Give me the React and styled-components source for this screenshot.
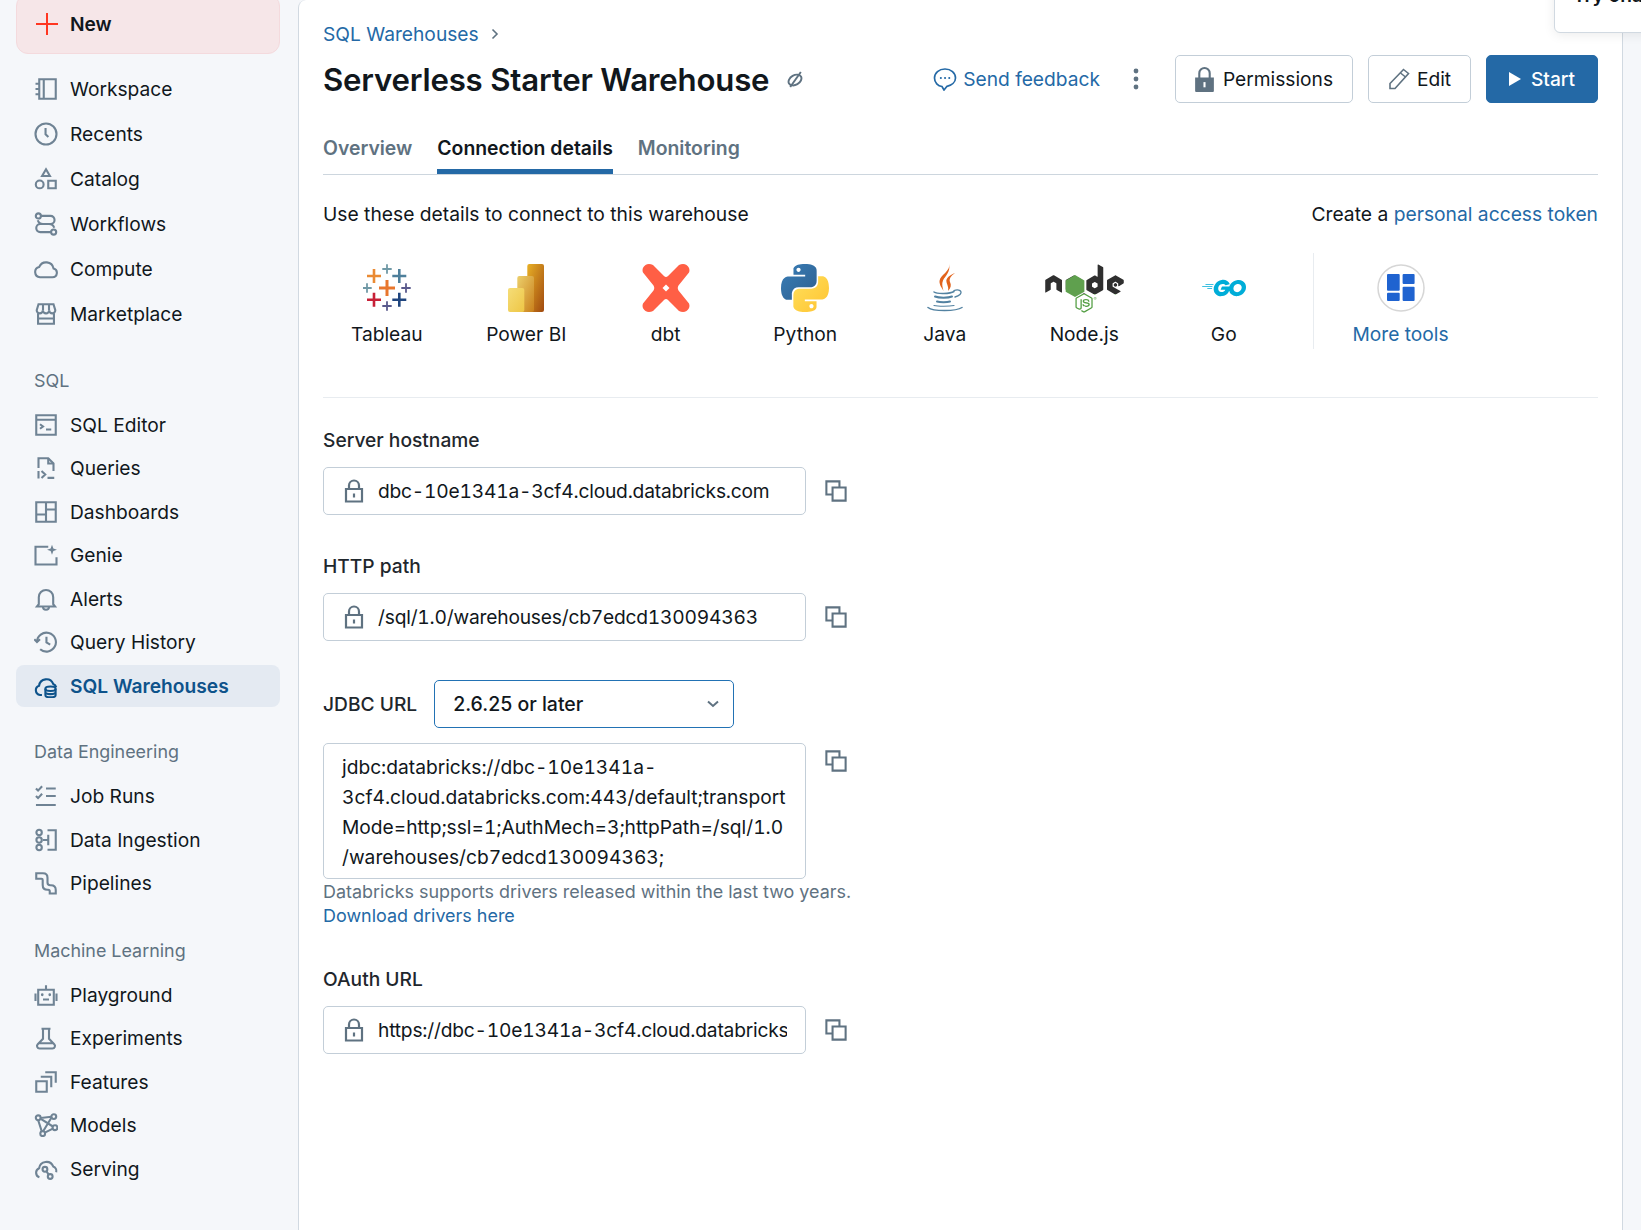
import React from 'react';
import styled, { createGlobalStyle } from 'styled-components';
import { SiGo } from 'react-icons/si';
import { FaNode } from 'react-icons/fa';

const GlobalStyle = createGlobalStyle`
  html, body {
    margin: 0;
    padding: 0;
    background: #f5f7fa;
    font-family: Inter, "Noto Sans", sans-serif;
    color: #11171c;
    -webkit-font-smoothing: antialiased;
  }
`;

const Page = styled.div`
  position: relative;
  display: flex;
  width: 1641px;
  height: 1230px;
  overflow: hidden;
  background: #f5f7fa;
`;

/* sidebar */
const Sidebar = styled.nav`
  flex: 0 0 298px;
  box-sizing: border-box;
  padding: 0 18px 0 16px;
`;

const NewButton = styled.button`
  display: flex;
  align-items: center;
  gap: 11px;
  box-sizing: border-box;
  width: 264px;
  height: 60px;
  margin: -6px 0 12.5px;
  padding: 0 0 0 18px;
  background: #f6e6e8;
  border: 1px solid #f4dadd;
  border-radius: 12px;
  font: 600 19.2px/24px Inter, sans-serif;
  color: #11171c;
`;

const NavRow = styled.a`
  display: flex;
  align-items: center;
  gap: 12px;
  box-sizing: border-box;
  height: ${(props) => (props.$active ? '41.5px' : props.$tall ? '45px' : '43.5px')};
  margin: ${(props) => (props.$active ? '1px 0' : '0')};
  padding-left: 18px;
  border-radius: 8px;
  background: ${(props) => (props.$active ? '#e4eaf2' : 'transparent')};
  color: ${(props) => (props.$active ? '#0e538b' : '#11171c')};
  font-size: 19.2px;
  line-height: 24px;
  font-weight: ${(props) => (props.$active ? 600 : 400)};
`;

const NavIcon = styled.svg`
  flex: 0 0 24px;
  width: 24px;
  height: 24px;
  fill: none;
  stroke: ${(props) => (props.$active ? '#0e538b' : '#6f8394')};
  stroke-width: 1.4;
`;

const SectionTitle = styled.div`
  margin: ${(props) => (props.$first ? '32px 0 10.5px' : '33.5px 0 10.5px')};
  padding-left: 18px;
  font-size: 17.9px;
  line-height: 24px;
  color: #5f7281;
`;

/* main panel */
const Main = styled.main`
  flex: 0 0 1325px;
  box-sizing: border-box;
  height: 1230px;
  padding: 22px 24px 0 24px;
  background: #fff;
  border-left: 1px solid #d1d9e1;
  border-right: 1px solid #d1d9e1;
  border-top-left-radius: 8px;
`;

const Breadcrumb = styled.div`
  display: flex;
  align-items: center;
  gap: 12px;
  height: 24px;
  font-size: 19.2px;
  color: #2469a6;
`;

const HeaderRow = styled.header`
  display: flex;
  align-items: center;
  justify-content: space-between;
  height: 48px;
  margin-top: 9px;
`;

const TitleGroup = styled.div`
  display: flex;
  align-items: center;
  gap: 18px;
  padding-top: 1px;
`;

const Title = styled.h1`
  margin: 0;
  font-size: 31.2px;
  line-height: 46px;
  font-weight: 600;
  letter-spacing: -0.2px;
  color: #11171c;
`;

const Actions = styled.div`
  display: flex;
  align-items: center;
`;

const FeedbackLink = styled.a`
  display: flex;
  align-items: center;
  gap: 6px;
  font-size: 19.2px;
  color: #2469a6;
`;

const ActionButton = styled.button`
  display: flex;
  align-items: center;
  justify-content: center;
  gap: ${(props) => props.$iconGap}px;
  box-sizing: border-box;
  width: ${(props) => props.$width}px;
  height: 48px;
  margin-left: ${(props) => props.$gap}px;
  padding: 0;
  background: ${(props) => (props.$primary ? '#2469a6' : '#fff')};
  border: 1px solid ${(props) => (props.$primary ? '#2469a6' : '#c3ced8')};
  border-radius: 5px;
  font: ${(props) => (props.$primary ? 500 : 400)} 19.2px/24px Inter, sans-serif;
  color: ${(props) => (props.$primary ? '#fff' : '#11171c')};
`;

const Tabs = styled.div`
  display: flex;
  gap: 25px;
  margin-top: 33px;
  border-bottom: 1px solid #cdd6de;
`;

const Tab = styled.div`
  padding-bottom: 9px;
  border-bottom: 5px solid ${(props) => (props.$active ? '#2469a6' : 'transparent')};
  font-size: 19.4px;
  line-height: 24px;
  font-weight: 600;
  color: ${(props) => (props.$active ? '#11171c' : '#5f7281')};
`;

const IntroRow = styled.div`
  display: flex;
  justify-content: space-between;
  margin-top: 27px;
  font-size: 19.25px;
  line-height: 24px;
`;

const Link = styled.a`
  color: #2469a6;
`;

const ToolsRow = styled.div`
  display: flex;
  height: 96px;
  margin: 27px 0 0 -6px;
`;

const Tool = styled.div`
  flex: 0 0 ${(props) => props.$width || 139.5}px;
  display: flex;
  flex-direction: column;
  align-items: center;
  padding-top: 11px;
  font-size: 19.2px;
  line-height: 24px;
  color: ${(props) => (props.$link ? '#2469a6' : '#11171c')};
`;

const ToolIcon = styled.div`
  display: flex;
  align-items: center;
  justify-content: center;
  height: 48px;
  margin-bottom: 10px;
`;

const ToolDivider = styled.div`
  width: 1px;
  margin-left: 19px;
  background: #e8ecf0;
`;

const Rule = styled.hr`
  height: 1px;
  margin: 48px 0 30px;
  border: 0;
  background: #e8ecf0;
`;

const Fields = styled.div`
  display: flex;
  flex-direction: column;
  gap: 39px;
`;

const Label = styled.div`
  font-size: 19.2px;
  line-height: 24px;
  font-weight: 500;
  color: #1f272d;
`;

const FieldRow = styled.div`
  display: flex;
  align-items: ${(props) => (props.$top ? 'flex-start' : 'center')};
  gap: 19px;
  margin-top: 15px;
`;

const InputBox = styled.div`
  display: flex;
  align-items: center;
  gap: 14px;
  box-sizing: border-box;
  width: 483px;
  height: 48px;
  padding: 0 18px 0 20px;
  border: 1px solid #c3ced8;
  border-radius: 5px;
  font-size: 19.2px;
  line-height: 24px;
`;

const InputValue = styled.div`
  flex: 1;
  min-width: 0;
  overflow: hidden;
  white-space: nowrap;
  font-variant-numeric: tabular-nums;
  letter-spacing: -0.2px;
`;

const TextBox = styled.div`
  box-sizing: border-box;
  width: 483px;
  height: 136px;
  padding: 8px 0 0 18px;
  border: 1px solid #c3ced8;
  border-radius: 5px;
  font-size: 19.2px;
  font-variant-numeric: tabular-nums;
  line-height: 30px;
  white-space: pre;
`;

const CopyIcon = styled.svg`
  flex: 0 0 22px;
  width: 22px;
  height: 22px;
  fill: none;
  stroke: #5f7281;
  stroke-width: 1.5;
  margin-top: ${(props) => (props.$top ? '7px' : '0')};
`;

const JdbcRow = styled.div`
  display: flex;
  align-items: center;
  gap: 17px;
`;

const Select = styled.div`
  display: flex;
  align-items: center;
  justify-content: space-between;
  box-sizing: border-box;
  width: 300px;
  height: 48px;
  padding: 0 14px 0 18px;
  border: 1px solid #2272b4;
  border-radius: 5px;
  font-size: 19.5px;
  font-weight: 500;
  line-height: 24px;
`;

const Helper = styled.div`
  margin-top: 1px;
  font-size: 17.95px;
  line-height: 24px;
  color: #5f7281;
`;

/* clipped popover at the top right corner */
const Popover = styled.div`
  position: absolute;
  top: -20px;
  left: 1554px;
  width: 120px;
  height: 53px;
  box-sizing: border-box;
  padding: 2px 0 0 18px;
  background: #fff;
  border: 1px solid #d1d9e1;
  border-radius: 6px;
  box-shadow: 0 2px 12px rgba(0, 0, 0, 0.08);
  font-size: 19.2px;
  line-height: 24px;
  font-weight: 600;
  white-space: nowrap;
`;

const navIcons = {
  workspace: <><path d="M3.5 1.5h11v13h-11z" /><path d="M6.5 1.5v13" /><path d="M1 4.5h2.5M1 8h2.5M1 11.5h2.5" /></>,
  recents: <><circle cx="8" cy="8" r="7" /><path d="M7.7 4v4.2L9.6 10" /></>,
  catalog: <><path d="M8 1.5 10.6 6H5.4z" /><circle cx="3.8" cy="11.6" r="2.6" /><path d="M9.5 9.2h5v5h-5z" /></>,
  workflows: <><circle cx="2.9" cy="2.6" r="1.7" /><circle cx="13.1" cy="13.4" r="1.7" /><path d="M4.6 2.6H11a2.7 2.7 0 0 1 0 5.4H4.2a2.7 2.7 0 0 0 0 5.4h7.2" /><path d="M2.5 5.5c.5 1.5 2 2.5 3.5 2.5M13.5 10.5C13 9 11.500 8 10 8" /></>,
  compute: <path d="M4 13.5h8.300a3 3 0 0 0 .7-5.900A5 5 0 0 0 3.500 6.600 3.500 3.500 0 0 0 4 13.500z" />,
  marketplace: <><path d="M1.800 5.500 3 1.500h10l1.200 4a2 2 0 0 1-4.100 0 2.100 2.100 0 0 1-4.200 0 2 2 0 0 1-4.100 0z" /><path d="M2.700 7.500v7h10.600v-7M2.700 11h10.600M6 1.500v4M10 1.500v4" /></>,
  editor: <><path d="M1.500 1.500h13v13h-13zM1.500 4.500h13" /><path d="M4 7.500 6 9l-2 1.500M8 11h3.500" /></>,
  queries: <><path d="M3 8V1.500h6.500L13 5v5" /><path d="M9.500 1.500V5H13" /><path d="M3 10v5M5 10l2.500 2.300L5 14.600M9 14.600h4.500" /></>,
  dashboards: <><path d="M1.500 1.500h13v13h-13z" /><path d="M8 1.500v13M1.500 9.700H8M8 6.300h6.500" /></>,
  genie: <><path d="M15 9.500v4.800H1V2.500h8.500" /><path d="M12 1.200l.9 2.400 2.400.9-2.400.9-.9 2.400-.9-2.400-2.400-.9 2.400-.9z" fill="#6f8394" stroke="none" /></>,
  alerts: <><path d="M3.200 11.500V6.800a4.800 4.800 0 0 1 9.600 0v4.700l1.200 1.500H2z" /><path d="M6 13.200a2 2 0 0 0 4 0" /></>,
  history: <><path d="M2 8a6.300 6.300 0 1 1 2.100 4.800" /><path d="M.2 6.200 2 8l2-1.800" /><path d="M8.300 4.500v3.800l2.500 1.400" /></>,
  warehouses: <><path d="M5.300 14H4a3.200 3.200 0 0 1-.6-6.200 4.900 4.900 0 0 1 9.400-1.200 3.200 3.200 0 0 1 2 2.200" /><ellipse cx="11" cy="9.800" rx="3.400" ry="1.500" /><path d="M7.600 9.800v4.400c0 .8 1.500 1.400 3.400 1.400s3.400-.6 3.400-1.400V9.800M7.600 12c0 .8 1.500 1.400 3.400 1.400s3.400-.6 3.400-1.400" /></>,
  jobruns: <><path d="M1.300 3l1.400 1.400L5.400 1.500M1.300 8l1.400 1.400 2.700-2.900M1.300 14h13.200M8 3h6.500M8 8h6.500" /></>,
  ingestion: <><circle cx="3.400" cy="3" r="1.800" /><circle cx="3.400" cy="8" r="1.800" /><circle cx="3.400" cy="13" r="1.800" /><path d="M9 1.500h5.500v13H9M6 8h3.500M9.500 4.500v7" /></>,
  pipelines: <path d="M1.500 1.500H6c1.800 0 3 1 3 3v3.200c0 1 .8 1.800 1.800 1.800h.5c1.900 0 3.200 1.300 3.200 3.200v2.300h-4v-1.500c0-.6-.4-1-1-1H9c-2 0-3.200-1.300-3.200-3.200V6c0-.5-.3-.8-.8-.8H1.500z" />,
  playground: <><path d="M2.800 4.500h10.400v10H2.800zM8 4.500v-3M1 7v5M15 7v5M6 11h4" /><path d="M5.500 7.800v.1M10.500 7.800v.1" strokeLinecap="round" strokeWidth="1.800" /></>,
  experiments: <><path d="M5 1.800h6M6 1.800v6.700l-3.500 3.600a1.700 1.700 0 0 0 1.200 2.900h8.600a1.700 1.700 0 0 0 1.200-2.900L10 8.500V1.800M3.500 11.500h9" /></>,
  features: <><path d="M1.500 7.500h7v7h-7zM4.500 4.500h7v7M7.500 1.500h7v7" /></>,
  models: <><circle cx="2.800" cy="3.200" r="1.600" /><circle cx="13.200" cy="2.400" r="1.600" /><circle cx="14" cy="9.800" r="1.600" /><circle cx="5.800" cy="13.800" r="1.600" /><path d="M4.300 3.800 12.600 9M11.700 3 6 12.300M4.400 3.300l7.200-.8M7.200 13.100l5.400-2.700M2.800 4.800l2.400 7.500" /></>,
  serving: <><path d="M3.600 13.500A3.200 3.200 0 0 1 3.400 7.500a4.900 4.900 0 0 1 9.400-1.200 3.200 3.200 0 0 1 2 3.800" /><circle cx="7.300" cy="8.200" r="1.600" /><circle cx="10.800" cy="13" r="1.600" /><path d="M8.300 9.500l1.500 2.200" /></>
};

const mainNav = [
  ['workspace', 'Workspace'],
  ['recents', 'Recents'],
  ['catalog', 'Catalog'],
  ['workflows', 'Workflows'],
  ['compute', 'Compute'],
  ['marketplace', 'Marketplace']
];

const navSections = [
  {
    title: 'SQL',
    items: [
      ['editor', 'SQL Editor'],
      ['queries', 'Queries'],
      ['dashboards', 'Dashboards'],
      ['genie', 'Genie'],
      ['alerts', 'Alerts'],
      ['history', 'Query History'],
      ['warehouses', 'SQL Warehouses', true]
    ]
  },
  {
    title: 'Data Engineering',
    items: [
      ['jobruns', 'Job Runs'],
      ['ingestion', 'Data Ingestion'],
      ['pipelines', 'Pipelines']
    ]
  },
  {
    title: 'Machine Learning',
    items: [
      ['playground', 'Playground'],
      ['experiments', 'Experiments'],
      ['features', 'Features'],
      ['models', 'Models'],
      ['serving', 'Serving']
    ]
  }
];

function NavItem({ icon, label, active, tall }) {
  return (
    <NavRow $active={active} $tall={tall}>
      <NavIcon viewBox="0 0 16 16" $active={active}>{navIcons[icon]}</NavIcon>
      {label}
    </NavRow>
  );
}

const tableauCrosses = [
  [24, 24, 8, 3, '#e8762d'],
  [11, 12, 7, 2.6, '#ea8a33'],
  [36.3, 12, 7, 2.6, '#4e7f9b'],
  [11, 35.7, 7, 2.6, '#c72037'],
  [36.3, 35.7, 7, 2.6, '#1f457e'],
  [24, 5, 4.700, 1.800, '#7099a6'],
  [4, 24, 4.700, 1.800, '#7099a6'],
  [43, 24, 4.700, 1.800, '#59598c'],
  [24, 42, 4.700, 1.800, '#59598c']
];

const TableauLogo = () => (
  <svg width="48" height="48" viewBox="0 0 48 48">
    {tableauCrosses.map(([x, y, r, w, color]) => (
      <path key={`${x}-${y}`} d={`M${x - r} ${y}h${r * 2}M${x} ${y - r}v${r * 2}`} stroke={color} strokeWidth={w} />
    ))}
  </svg>
);

const PowerBiLogo = () => (
  <svg width="36" height="48" viewBox="0 0 36 48">
    <defs>
      <linearGradient id="pbi1" x1="0" y1="0" x2="1" y2="1">
        <stop offset="0" stopColor="#e8b026" />
        <stop offset="1" stopColor="#a0490f" />
      </linearGradient>
      <linearGradient id="pbi2" x1="0" y1="0" x2="1" y2="1">
        <stop offset="0" stopColor="#eccf6b" />
        <stop offset="1" stopColor="#c9801b" />
      </linearGradient>
      <linearGradient id="pbi3" x1="0" y1="0" x2="1" y2="1">
        <stop offset="0" stopColor="#f5dd78" />
        <stop offset="1" stopColor="#eec645" />
      </linearGradient>
    </defs>
    <rect x="19.300" width="16.700" height="48" rx="2" fill="url(#pbi1)" />
    <rect x="9.300" y="12" width="16.700" height="36" rx="2" fill="url(#pbi2)" />
    <rect y="24" width="16.300" height="24" rx="2" fill="url(#pbi3)" />
  </svg>
);

const DbtLogo = () => (
  <svg width="48" height="48" viewBox="0 0 48 48">
    <path
      d="M3.500 1C5.500-.3 8.500-.2 11 1L22 12Q24 14 26 12L37 1C39.500-.2 42.500-.3 44.500 1 47.500 3 48 6 47 8.500L36.500 21.500Q35 24 36.500 26.500L47 39.500C48 42 47.500 45 44.500 47 42.500 48.300 39.500 48.200 37 47L26 36Q24 34 22 36L11 47C8.500 48.200 5.500 48.300 3.500 47 .5 45 0 42 1 39.500L11.500 26.500Q13 24 11.500 21.500L1 8.500C0 6 .5 3 3.500 1Z"
      fill="#ff5f45"
    />
    <path d="M24 20.500 27.500 24 24 27.500 20.500 24z" fill="#fff" />
  </svg>
);

const pythonPath = 'M54.900 0C26.800 0 28.600 12.200 28.600 12.200v12.600h26.800v3.800H17.900S0 26.600 0 54.900c0 28.300 15.600 27.300 15.600 27.300h9.300V69.100s-.5-15.600 15.400-15.600h26.500s14.900.2 14.900-14.400V14.900S84 0 54.900 0zM40.200 8.500c2.700 0 4.800 2.200 4.800 4.800s-2.200 4.800-4.800 4.800-4.800-2.200-4.800-4.800 2.200-4.800 4.800-4.800z';

const PythonLogo = () => (
  <svg width="48" height="48" viewBox="0 0 110 110">
    <defs>
      <linearGradient id="pyBlue" x1="0" y1="0" x2="1" y2="1">
        <stop offset="0" stopColor="#387eb8" />
        <stop offset="1" stopColor="#2f5f8e" />
      </linearGradient>
      <linearGradient id="pyYellow" x1="0" y1="0" x2="1" y2="1">
        <stop offset="0" stopColor="#ffc331" />
        <stop offset="1" stopColor="#ffe05c" />
      </linearGradient>
    </defs>
    <path d={pythonPath} fill="url(#pyBlue)" />
    <path d={pythonPath} fill="url(#pyYellow)" transform="rotate(180 55 55)" />
  </svg>
);

const JavaLogo = () => (
  <svg width="36" height="48" viewBox="0 0 36 48" fill="none">
    <path d="M22 0C24 7 13 11 12.500 17 12.300 21 15 24 16.500 27 15.500 23 14.500 20 16 16.500 18 12 24 8 22 0Z" fill="#e2631c" />
    <path d="M28 9C23 11 18.500 14 19.500 18 20 21 22 23 21 27 24 24 24.500 21 23 18 22 15 23.500 12 28 9Z" fill="#e2631c" />
    <g stroke="#5382a1" strokeLinecap="round">
      <path d="M7 28c3 2 16 2 20-.5" strokeWidth="1.500" />
      <path d="M27 26.500c5-2 9 1 6 4-1 1-3 2-5 2.500" strokeWidth="1.300" />
      <path d="M8 32.500c4 1.500 13 1.500 17 0" strokeWidth="2" />
      <path d="M10 37.500c3 1 10 1 13 0" strokeWidth="2" />
      <path d="M1 43.500c5 4 28 4 34 0" strokeWidth="1.500" />
      <path d="M7 41.500c4 1 15 1 20 0" strokeWidth="1.200" />
    </g>
  </svg>
);

const NodeLogo = () => (
  <svg width="79" height="63" viewBox="0 0 640 512" overflow="visible">
    <defs>
      <clipPath id="nodeWord"><rect width="640" height="300" /></clipPath>
      <clipPath id="nodeJs"><rect y="300" width="640" height="212" /></clipPath>
    </defs>
    <g clipPath="url(#nodeWord)">
      <FaNode size={640} y={-64} color="#2f2f2f" />
    </g>
    <g clipPath="url(#nodeJs)">
      <FaNode size={640} y={-64} color="#539e43" />
    </g>
    <path d="M243 146l76 44v92l-76 44-76-44v-92z" fill="#5fa04e" />
  </svg>
);

const MoreToolsLogo = () => (
  <svg width="48" height="48" viewBox="0 0 48 48">
    <circle cx="24" cy="24" r="23" fill="#fff" stroke="#d6d6d6" strokeWidth="1.500" />
    <g fill="#1f63d0">
      <rect x="10" y="10" width="12.700" height="16.700" rx="1" />
      <rect x="10" y="28.700" width="12.700" height="8.300" rx="1" />
      <rect x="25.600" y="10" width="12" height="10" rx="1" />
      <rect x="25.600" y="22.700" width="12" height="14.300" rx="1" />
    </g>
  </svg>
);

const tools = [
  ['Tableau', <TableauLogo />],
  ['Power BI', <PowerBiLogo />],
  ['dbt', <DbtLogo />],
  ['Python', <PythonLogo />],
  ['Java', <JavaLogo />],
  ['Node.js', <NodeLogo />],
  ['Go', <SiGo size={44} color="#00add8" />]
];

const LockOutline = () => (
  <svg width="20" height="24" viewBox="0 0 20 24" fill="none" stroke="#5f7281" strokeWidth="2.200" style={{ flex: '0 0 20px' }}>
    <path d="M2 10h16v12.500H2z" />
    <path d="M5 10V6.500a5 5 0 0 1 10 0V10" />
    <path d="M10 14.500v4" />
  </svg>
);

const Copy = ({ top }) => (
  <CopyIcon viewBox="0 0 16 16" $top={top}>
    <path d="M5.500 5.500h9.500v9.500H5.500z" />
    <path d="M10.500 5.500V1H1v9.500h4.500" />
  </CopyIcon>
);

function CopyField({ value }) {
  return (
    <FieldRow>
      <InputBox>
        <LockOutline />
        <InputValue>{value}</InputValue>
      </InputBox>
      <Copy />
    </FieldRow>
  );
}

const jdbcUrl = [
  'jdbc:databricks://dbc-10e1341a-',
  '3cf4.cloud.databricks.com:443/default;transport',
  'Mode=http;ssl=1;AuthMech=3;httpPath=/sql/1.0',
  '/warehouses/cb7edcd130094363;'
].join('\n');

export default function App() {
  return (
    <Page>
      <GlobalStyle />
      <Sidebar>
        <NewButton>
          <svg width="24" height="24" viewBox="0 0 24 24" stroke="#ff3621" strokeWidth="2">
            <path d="M12 1v22M1 12h22" />
          </svg>
          New
        </NewButton>
        {mainNav.map(([icon, label]) => (
          <NavItem key={label} icon={icon} label={label} tall />
        ))}
        {navSections.map((section, index) => (
          <div key={section.title}>
            <SectionTitle $first={index === 0}>{section.title}</SectionTitle>
            {section.items.map(([icon, label, active]) => (
              <NavItem key={label} icon={icon} label={label} active={active} />
            ))}
          </div>
        ))}
      </Sidebar>

      <Main>
        <Breadcrumb>
          SQL Warehouses
          <svg width="8" height="12" viewBox="0 0 8 12" fill="none" stroke="#5f7281" strokeWidth="1.600">
            <path d="M1.500 1.500 6 6l-4.500 4.500" />
          </svg>
        </Breadcrumb>
        <HeaderRow>
          <TitleGroup>
            <Title>Serverless Starter Warehouse</Title>
            <svg width="16" height="17" viewBox="0 0 15 16" fill="none" stroke="#5f7281" strokeWidth="1.800">
              <ellipse cx="7.500" cy="8.500" rx="6.500" ry="4.500" transform="rotate(-30 7.500 8.500)" />
              <path d="M3 15 13 1" />
            </svg>
          </TitleGroup>
          <Actions>
            <FeedbackLink>
              <svg width="24" height="24" viewBox="0 0 24 24" fill="none" stroke="#2469a6" strokeWidth="1.700">
                <path d="M12 2C6 2 1.500 5.800 1.500 11c0 4.700 3.500 8 7.500 8.500l2 3.500 3-3.700c4.500-1 8.500-4 8.500-8.300C22.500 5.800 18 2 12 2z" />
                <path d="M7.800 11h.1M12 11h.1M16.200 11h.1" strokeLinecap="round" strokeWidth="2" />
              </svg>
              Send feedback
            </FeedbackLink>
            <svg width="6" height="22" viewBox="0 0 6 22" fill="#5f7281" style={{ margin: '0 36px 0 33px' }}>
              <circle cx="3" cy="3" r="2.400" />
              <circle cx="3" cy="11" r="2.400" />
              <circle cx="3" cy="19" r="2.400" />
            </svg>
            <ActionButton $width={178} $gap={0} $iconGap={9}>
              <svg width="19" height="25" viewBox="0 0 18 24" fill="#5f7281">
                <path d="M0 10h18v13a1 1 0 0 1-1 1H1a1 1 0 0 1-1-1z" />
                <path d="M4 11V6a5 5 0 0 1 10 0v5" fill="none" stroke="#5f7281" strokeWidth="2" />
                <path d="M9 14.500v5" stroke="#fff" strokeWidth="2" />
              </svg>
              Permissions
            </ActionButton>
            <ActionButton $width={103} $gap={15} $iconGap={7}>
              <svg width="22" height="22" viewBox="0 0 22 22" fill="none" stroke="#5f7281" strokeWidth="1.600">
                <path d="M15.500 1.500l5 4L7 20.500H2v-5z" />
                <path d="M12.500 5l5 4" />
              </svg>
              Edit
            </ActionButton>
            <ActionButton $width={112} $gap={15} $iconGap={10} $primary>
              <svg width="12" height="14" viewBox="0 0 12 14" fill="#fff">
                <path d="M0 0l12 7-12 7z" />
              </svg>
              Start
            </ActionButton>
          </Actions>
        </HeaderRow>

        <Tabs>
          <Tab>Overview</Tab>
          <Tab $active>Connection details</Tab>
          <Tab>Monitoring</Tab>
        </Tabs>

        <IntroRow>
          <span>Use these details to connect to this warehouse</span>
          <span>Create a <Link>personal access token</Link></span>
        </IntroRow>

        <ToolsRow>
          {tools.map(([name, logo]) => (
            <Tool key={name}>
              <ToolIcon>{logo}</ToolIcon>
              {name}
            </Tool>
          ))}
          <ToolDivider />
          <Tool $link $width={174}>
            <ToolIcon><MoreToolsLogo /></ToolIcon>
            More tools
          </Tool>
        </ToolsRow>

        <Rule />

        <Fields>
          <div>
            <Label>Server hostname</Label>
            <CopyField value="dbc-10e1341a-3cf4.cloud.databricks.com" />
          </div>
          <div>
            <Label>HTTP path</Label>
            <CopyField value="/sql/1.0/warehouses/cb7edcd130094363" />
          </div>
          <div>
            <JdbcRow>
              <Label>JDBC URL</Label>
              <Select>
                2.6.25 or later
                <svg width="12" height="8" viewBox="0 0 12 8" fill="none" stroke="#5f7281" strokeWidth="2">
                  <path d="M1 1.500 6 6l5-4.500" />
                </svg>
              </Select>
            </JdbcRow>
            <FieldRow $top>
              <TextBox>{jdbcUrl}</TextBox>
              <Copy top />
            </FieldRow>
            <Helper>
              Databricks supports drivers released within the last two years.
              <br />
              <Link>Download drivers here</Link>
            </Helper>
          </div>
          <div>
            <Label>OAuth URL</Label>
            <CopyField value="https://dbc-10e1341a-3cf4.cloud.databricks.com/oidc" />
          </div>
        </Fields>
      </Main>
      <Popover>Try ona</Popover>
    </Page>
  );
}
